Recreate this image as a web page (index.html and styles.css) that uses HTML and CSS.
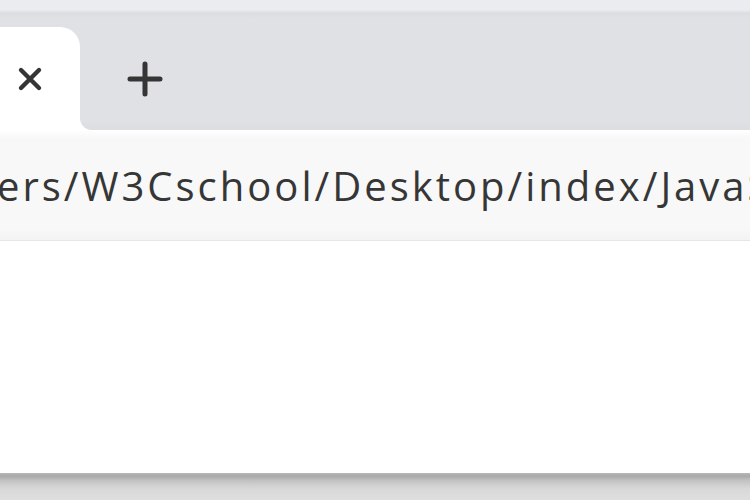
FILE: index.html
```html
<!DOCTYPE html>
<html>
<head>
<meta charset="utf-8">
<link rel="stylesheet" href="styles.css">
</head>
<body>
<div class="window">
  <div class="tabstrip">
    <div class="tab">
      <svg class="close" width="28" height="28" viewBox="0 0 28 28"><path d="M5 5 L23 23 M23 5 L5 23" stroke="#353535" stroke-width="4.4" stroke-linecap="round"/></svg>
    </div>
    <div class="newtab">
      <svg width="38" height="38" viewBox="0 0 38 38"><path d="M19 4 V34 M4 19 H34" stroke="#353535" stroke-width="5" stroke-linecap="round"/></svg>
    </div>
  </div>
  <div class="toolbar">
    <div class="address"><span class="url">ers/W3Cschool/Desktop/index/JavaScript</span></div>
  </div>
  <div class="content"></div>
  <div class="footer"></div>
</div>
</body>
</html>
```
FILE: styles.css
```css
html, body {
  margin: 0;
  padding: 0;
}
body {
  width: 750px;
  height: 500px;
  overflow: hidden;
  background: #ffffff;
  font-family: "Open Sans", "Noto Sans", sans-serif;
}
.window {
  display: flex;
  flex-direction: column;
  height: 500px;
}
.tabstrip {
  height: 130px;
  box-sizing: border-box;
  padding-top: 27px;
  display: flex;
  align-items: stretch;
  background: linear-gradient(to bottom, #ebecef 0, #ebecef 10px, #dcdde1 13px, #dfe1e5 18px, #dfe1e5 122px, #dcdee2 128px, #dcdee2 130px);
}
.tab {
  position: relative;
  width: 80px;
  background: #ffffff;
  border-top-right-radius: 20px;
  display: flex;
  align-items: center;
  padding-left: 16px;
  box-sizing: border-box;
}
.tab::after {
  content: "";
  position: absolute;
  right: -12px;
  bottom: 0;
  width: 12px;
  height: 12px;
  background: radial-gradient(circle at 100% 0, transparent 11.5px, #ffffff 12.5px);
}
.close {
  margin-top: 0;
}
.newtab {
  display: flex;
  align-items: center;
  padding-left: 46px;
}
.newtab svg {
  margin-top: 0;
}
.toolbar {
  height: 111px;
  box-sizing: border-box;
  background: linear-gradient(to bottom, #ffffff 0, #f8f8f9 8px, #f8f8f9 100px, #f4f4f5 108px);
  border-bottom: 1px solid #e6e6e8;
  display: flex;
  align-items: center;
  overflow: hidden;
}
.address {
  white-space: nowrap;
  overflow: hidden;
  width: 750px;
}
.url {
  display: inline-block;
  margin-left: -3px;
  font-size: 40px;
  color: #363636;
  letter-spacing: 3px;
  margin-top: 0;
}
.content {
  flex: 1;
  background: #ffffff;
}
.footer {
  height: 27px;
  background: linear-gradient(to bottom, #b9b9b9 0, #a9a9a9 3px, #c4c4c4 8px, #d9d9d9 16px, #dedede 27px);
}
```
